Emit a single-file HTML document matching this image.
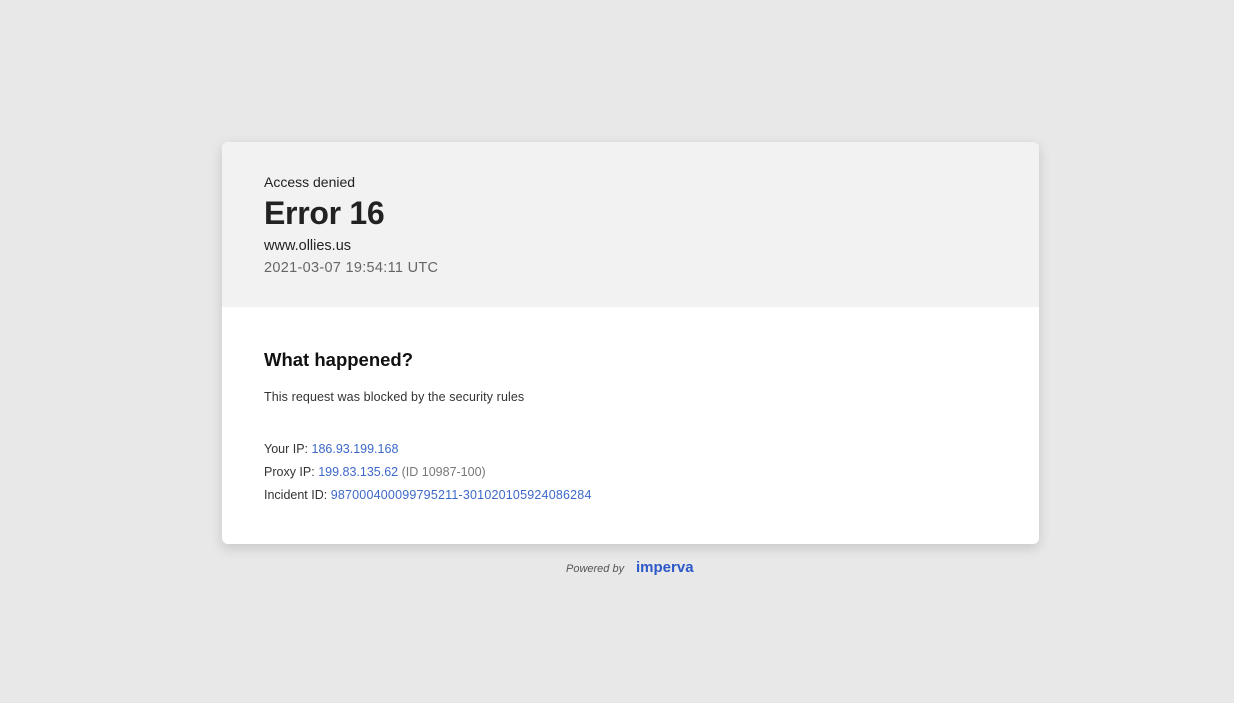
<!DOCTYPE html>
<html><head><style>
body{margin:0;background:#e8e8e8;font-family:"Liberation Sans",sans-serif;width:1234px;height:703px;position:relative;overflow:hidden}
.card{position:absolute;left:222px;top:142px;width:817px;height:402px;border-radius:6px;background:#fff;box-shadow:0 4px 12px rgba(0,0,0,.15);overflow:hidden}
.head{background:#f2f2f2;height:165px;position:relative}
.t{position:absolute;left:42px;white-space:nowrap}
a{color:#3d68c8;text-decoration:none}
</style></head><body>
<div class="card">
<div class="head">
<div class="t" style="top:32px;font-size:14px;color:#222">Access denied</div>
<div class="t" style="top:53px;font-size:32px;font-weight:bold;color:#222;letter-spacing:-0.3px">Error 16</div>
<div class="t" style="top:96px;font-size:14.5px;color:#222">www.ollies.us</div>
<div class="t" style="top:118px;font-size:14.5px;color:#666;letter-spacing:0.3px">2021-03-07 19:54:11 UTC</div>
</div>
<div class="t" style="top:207px;font-size:18.5px;font-weight:bold;color:#111">What happened?</div>
<div class="t" style="top:248px;font-size:12.5px;color:#333;letter-spacing:0.1px">This request was blocked by the security rules</div>
<div class="t" style="top:300px;font-size:12.5px;color:#333">Your IP: <a>186.93.199.168</a></div>
<div class="t" style="top:323px;font-size:12.5px;color:#333">Proxy IP: <a>199.83.135.62</a> <span style="color:#777">(ID 10987-100)</span></div>
<div class="t" style="top:346px;font-size:12.5px;color:#333">Incident ID: <a style="letter-spacing:0.2px">987000400099795211-301020105924086284</a></div>
</div>
<div style="position:absolute;left:566px;top:563px;font-size:11px;font-style:italic;color:#555">Powered by</div>
<div style="position:absolute;left:636px;top:559px;font-size:15px;font-weight:bold;color:#2c58c8">imperva</div>
</body></html>
